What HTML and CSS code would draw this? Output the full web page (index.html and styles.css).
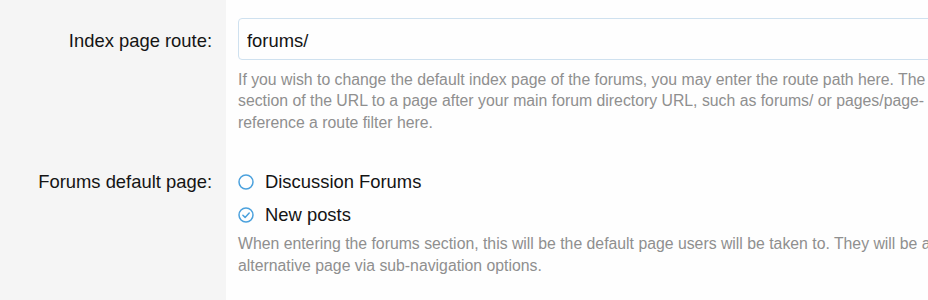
FILE: index.html
```html
<!DOCTYPE html>
<html lang="en">
<head>
<meta charset="utf-8">
<title>Options</title>
<link rel="stylesheet" href="styles.css">
</head>
<body>
<form class="form">
  <dl class="row row-first">
    <dt class="label"><label for="route">Index page route:</label></dt>
    <dd class="field">
      <input id="route" class="input" type="text" value="forums/">
      <div class="explain">If you wish to change the default index page of the forums, you may enter the route path here. The<br>section of the URL to a page after your main forum directory URL, such as forums/ or pages/page-<br>reference a route filter here.</div>
    </dd>
  </dl>
  <dl class="row row-second">
    <dt class="label">Forums default page:</dt>
    <dd class="field">
      <ul class="choices">
        <li class="choice">
          <svg class="radio" viewBox="0 0 16 16" width="16" height="16"><circle cx="8" cy="8" r="7" fill="none" stroke="#4ba1dd" stroke-width="1.5"/></svg>
          <span>Discussion Forums</span>
        </li>
        <li class="choice">
          <svg class="radio" viewBox="0 0 16 16" width="16" height="16"><circle cx="8" cy="8" r="7" fill="none" stroke="#4ba1dd" stroke-width="1.5"/><path d="M4.9 8.3 L7.1 10.4 L11.2 6" fill="none" stroke="#4ba1dd" stroke-width="1.5" stroke-linecap="round" stroke-linejoin="round"/></svg>
          <span>New posts</span>
        </li>
      </ul>
      <div class="explain explain-tight">When entering the forums section, this will be the default page users will be taken to. They will be a<br>alternative page via sub-navigation options.</div>
    </dd>
  </dl>
</form>
</body>
</html>
```
FILE: styles.css
```css
html, body {
  margin: 0;
  padding: 0;
  background: #fefefe;
  overflow: hidden;
}
body {
  font-family: "Liberation Sans", Arial, sans-serif;
  color: #141414;
  width: 928px;
  height: 300px;
}
.form {
  width: 1200px;
  min-height: 300px;
  background: linear-gradient(to right, #f5f5f5 0, #f5f5f5 226px, #fefefe 226px);
}
.row {
  display: grid;
  grid-template-columns: 226px 1fr;
  margin: 0;
}
.label {
  text-align: right;
  padding-right: 14px;
  font-size: 18.4px;
  color: #141414;
}
.field {
  margin: 0;
  padding-left: 12px;
}
.row-first .label {
  padding-top: 20px;
  line-height: 42px;
}
.row-first .field {
  padding-top: 18px;
  padding-bottom: 14px;
}
.row-second .label {
  padding-top: 18px;
  line-height: 33px;
}
.row-second .field {
  padding-top: 18px;
}
.input {
  display: block;
  box-sizing: border-box;
  width: 100%;
  height: 42px;
  margin: 0;
  padding: 3px 8px 0;
  border: 1px solid #cfe1ef;
  border-radius: 4px;
  background: #fefefe;
  font-family: "Liberation Sans", Arial, sans-serif;
  font-size: 18.4px;
  color: #141414;
  outline: none;
}
.explain {
  margin-top: 8.5px;
  font-size: 15.8px;
  line-height: 21.6px;
  color: #8f8f8f;
  white-space: nowrap;
}
.explain-tight {
  margin-top: 2px;
}
.choices {
  list-style: none;
  margin: 0;
  padding: 0;
}
.choice {
  display: flex;
  align-items: center;
  gap: 11px;
  height: 33px;
  font-size: 18.4px;
}
.radio {
  flex: none;
  margin-top: 1px;
}
```
